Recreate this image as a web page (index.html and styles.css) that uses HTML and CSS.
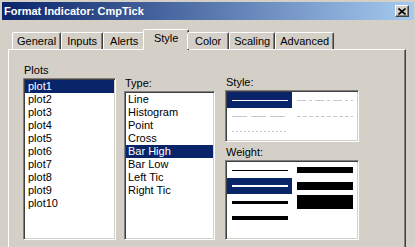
FILE: index.html
```html
<!DOCTYPE html>
<html lang="en">
  <head>
    <meta charset="UTF-8" />
    <title>Format Indicator: CmpTick</title>
    <link rel="stylesheet" href="styles.css">
  </head>
  <body>
    <div class="window">
      <div class="titlebar">
        <span class="title">Format Indicator: CmpTick</span>
        <button class="close-btn">
          <svg width="8" height="7" viewBox="0 0 8 7">
            <path d="M0.5 0.5L7.5 6.5M7.5 0.5L0.5 6.5" stroke="#000" stroke-width="1.6" />
          </svg>
        </button>
      </div>

      <div class="dialog-body">
        <div class="tabs">
          <div class="tab">General</div>
          <div class="tab">Inputs</div>
          <div class="tab">Alerts</div>
          <div class="tab active">Style</div>
          <div class="tab">Color</div>
          <div class="tab">Scaling</div>
          <div class="tab">Advanced</div>
        </div>

        <div class="panel">
          <!-- Plots -->
          <div class="group plots-group">
            <div class="group-label">Plots</div>
            <ul class="listbox plots-list">
              <li class="selected">plot1</li>
              <li>plot2</li>
              <li>plot3</li>
              <li>plot4</li>
              <li>plot5</li>
              <li>plot6</li>
              <li>plot7</li>
              <li>plot8</li>
              <li>plot9</li>
              <li>plot10</li>
            </ul>
          </div>

          <!-- Type -->
          <div class="group type-group">
            <div class="group-label">Type:</div>
            <ul class="listbox type-list">
              <li>Line</li>
              <li>Histogram</li>
              <li>Point</li>
              <li>Cross</li>
              <li class="selected">Bar High</li>
              <li>Bar Low</li>
              <li>Left Tic</li>
              <li>Right Tic</li>
            </ul>
          </div>

          <!-- Style + Weight -->
          <div class="group style-group">
            <div class="group-label">Style:</div>
            <div class="listbox picker style-picker">
              <div class="cell selected">
                <svg width="56" height="16"><line x1="0" y1="8.5" x2="56" y2="8.5" stroke="#fff" /></svg>
              </div>
              <div class="cell">
                <svg width="56" height="16"><line x1="0" y1="8.5" x2="56" y2="8.5" stroke="#c8c8c8" stroke-dasharray="9 3 3 3" /></svg>
              </div>
              <div class="cell">
                <svg width="56" height="16"><line x1="0" y1="8.5" x2="56" y2="8.5" stroke="#c8c8c8" stroke-dasharray="15 4" /></svg>
              </div>
              <div class="cell">
                <svg width="56" height="16"><line x1="0" y1="8.5" x2="56" y2="8.5" stroke="#c8c8c8" stroke-dasharray="4 2" /></svg>
              </div>
              <div class="cell">
                <svg width="56" height="16"><line x1="0" y1="7.5" x2="56" y2="7.5" stroke="#c8c8c8" stroke-dasharray="2 2" /></svg>
              </div>
            </div>

            <div class="group-label weight-label">Weight:</div>
            <div class="listbox picker weight-picker">
              <div class="cell"><div class="bar w1"></div></div>
              <div class="cell"><div class="bar w6"></div></div>
              <div class="cell selected"><div class="bar w2"></div></div>
              <div class="cell"><div class="bar w8"></div></div>
              <div class="cell"><div class="bar w3"></div></div>
              <div class="cell"><div class="bar w14"></div></div>
              <div class="cell"><div class="bar w4"></div></div>
            </div>
          </div>
        </div>
      </div>
    </div>
  </body>
</html>
```

FILE: styles.css
```css
* {
  box-sizing: border-box;
}

body {
  margin: 0;
  background: #d4d0c8;
  color: #000;
  font-family: "Liberation Sans", Arial, sans-serif;
  font-size: 11px;
}

.window {
  width: 415px;
  height: 247px;
  overflow: hidden;
  background: #d4d0c8;
  padding-top: 2px;
}

/* Title bar */
.titlebar {
  height: 18px;
  margin: 0 1px 0 2px;
  padding-left: 2px;
  display: flex;
  align-items: center;
  justify-content: space-between;
  background: linear-gradient(to right, #0a246a, #a6caf0);
  color: #fff;
  font-weight: bold;
}

.close-btn {
  width: 14px;
  height: 12px;
  margin-right: 5px;
  padding: 0;
  display: flex;
  align-items: center;
  justify-content: center;
  background: #d4d0c8;
  border: 1px solid;
  border-color: #fff #404040 #404040 #fff;
  box-shadow: inset -1px -1px #808080;
}

.dialog-body {
  padding: 9px 9px 0 8px;
}

/* Tabs */
.tabs {
  position: relative;
  z-index: 1;
  display: flex;
  align-items: flex-end;
  height: 20px;
  padding-left: 4px;
}

.tab {
  min-width: 42px;
  height: 17px;
  line-height: 16px;
  padding: 0 4px;
  text-align: center;
  background: #d4d0c8;
  border: 1px solid;
  border-bottom: none;
  border-color: #fff #404040 transparent #fff;
  border-radius: 2px 2px 0 0;
  box-shadow: inset -1px 0 #808080;
  white-space: nowrap;
}

.tab.active {
  min-width: 46px;
  height: 21px;
  line-height: 16px;
  margin: 0 -2px -1px;
  padding: 0 6px;
}

/* Panel */
.panel {
  display: flex;
  align-items: flex-end;
  padding: 14px 0 20px 14px;
  border: 1px solid;
  border-color: #fff #404040 #404040 #fff;
  box-shadow: inset -1px 0 #808080;
}

.group-label {
  height: 13px;
  line-height: 13px;
  margin-bottom: 1px;
  padding-left: 1px;
}

.plots-group {
  width: 93px;
}

.type-group {
  width: 91px;
  margin-left: 8px;
}

.style-group {
  width: 134px;
  margin-left: 10px;
}

.listbox {
  margin: 0;
  padding: 1px;
  list-style: none;
  background: #fff;
  border: 1px solid;
  border-color: #808080 #fff #fff #808080;
  box-shadow: inset 1px 1px #404040, inset -1px -1px #d4d0c8;
  overflow: hidden;
}

.listbox li {
  height: 13px;
  line-height: 13px;
  padding-left: 3px;
  white-space: nowrap;
}

.listbox .selected {
  background: #0a246a;
  color: #fff;
}

.plots-list {
  height: 162px;
}

.type-list {
  height: 149px;
}

.type-list li {
  padding-left: 2px;
}

/* Style / weight pickers */
.picker {
  display: grid;
  grid-template-columns: 65px 65px;
  grid-auto-rows: 16px;
  align-content: start;
}

.style-picker {
  height: 52px;
}

.weight-label {
  margin-top: 4px;
}

.weight-picker {
  height: 80px;
}

.cell {
  display: flex;
  align-items: center;
  padding: 0 4px 0 5px;
}

.cell svg {
  display: block;
}

.bar {
  width: 56px;
  background: #000;
}

.cell.selected .bar {
  background: #fff;
}

.w1 { height: 1px; }
.w2 { height: 2px; }
.w3 { height: 3px; }
.w4 { height: 4px; }
.w6 { height: 6px; }
.w8 { height: 8px; }
.w14 { height: 14px; }
```
